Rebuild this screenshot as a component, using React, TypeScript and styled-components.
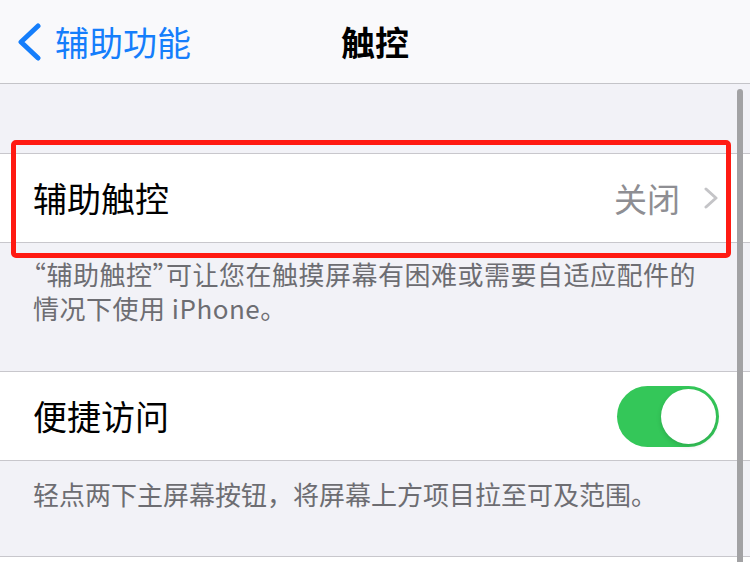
import React from "react";
import styled, { createGlobalStyle, css } from "styled-components";

const Global = createGlobalStyle`
  html, body { margin: 0; padding: 0; }
  body {
    background: #f2f2f7;
    font-family: "Noto Sans CJK SC", "Noto Sans", sans-serif;
    -webkit-font-smoothing: antialiased;
  }
`;

const Page = styled.div`
  position: relative;
  width: 750px;
  height: 562px;
  overflow: hidden;
  background: #f2f2f7;
`;

const NavBar = styled.header`
  display: grid;
  grid-template-columns: 1fr auto 1fr;
  align-items: center;
  height: 83px;
  background: #f9f9fb;
  border-bottom: 1px solid #c4c4c8;
`;

const BackButton = styled.div`
  display: flex;
  align-items: center;
  gap: 14px;
  padding-left: 17px;
  color: #157efb;
  font-size: 34px;
  line-height: 1;
`;

const Title = styled.div`
  font-size: 34px;
  font-weight: 700;
  color: #000;
  line-height: 1;
`;

const Spacer = styled.div<{ $h: number }>`
  height: ${(p) => p.$h}px;
`;

const Group = styled.div`
  position: relative;
  background: #fff;
  border-top: 1px solid #c8c7cc;
  border-bottom: 1px solid #c8c7cc;
`;

const Cell = styled.div`
  display: flex;
  align-items: center;
  justify-content: space-between;
  height: 88px;
  padding: 0 32px 0 33px;
`;

const Label = styled.span`
  font-size: 34px;
  color: #000;
  line-height: 1;
`;

const Detail = styled.div`
  display: flex;
  align-items: center;
  gap: 24px;
  color: #8e8e93;
  font-size: 33px;
  line-height: 1;
`;

const Footer = styled.div<{ $top: number; $bottom: number; $halfQuotes?: boolean }>`
  padding: ${(p) => p.$top}px 40px ${(p) => p.$bottom}px 33px;
  font-size: 26px;
  line-height: 34px;
  color: #6d6d72;
  ${(p) =>
    p.$halfQuotes &&
    css`
      font-feature-settings: "halt" 1;
      letter-spacing: 0.5px;
    `}
`;

const Highlight = styled.div`
  position: absolute;
  top: -14px;
  left: 11px;
  right: 19px;
  bottom: -16px;
  border: 5px solid #ff1a12;
  border-radius: 5px;
  pointer-events: none;
`;

const Toggle = styled.div<{ $on: boolean }>`
  position: relative;
  width: 102px;
  height: 61px;
  border-radius: 31px;
  background: ${(p) => (p.$on ? "#34c759" : "#e9e9eb")};
  margin-right: -1px;
`;

const Knob = styled.div`
  position: absolute;
  top: 3px;
  right: 3px;
  width: 55px;
  height: 55px;
  border-radius: 50%;
  background: #fff;
  box-shadow: 0 2px 5px rgba(0, 0, 0, 0.15);
`;

const ScrollBar = styled.div`
  position: absolute;
  top: 89px;
  left: 737px;
  width: 6px;
  height: 500px;
  border-radius: 3px;
  background: #a2a2a4;
`;

const Chevron = () => (
  <svg width="14" height="22" viewBox="0 0 14 22">
    <path d="M2 2 L12 11 L2 20" fill="none" stroke="#c4c4c7" strokeWidth="3" strokeLinecap="round" strokeLinejoin="round" />
  </svg>
);

const BackChevron = () => (
  <svg width="24" height="38" viewBox="0 0 24 38">
    <path d="M21 3 L4 19 L21 35" fill="none" stroke="#157efb" strokeWidth="5" strokeLinecap="round" strokeLinejoin="round" />
  </svg>
);

export default function App() {
  return (
    <Page>
      <Global />
      <NavBar>
        <BackButton>
          <BackChevron />
          <span>辅助功能</span>
        </BackButton>
        <Title>触控</Title>
        <div />
      </NavBar>
      <Spacer $h={69} />
      <Group>
        <Cell>
          <Label>辅助触控</Label>
          <Detail>
            <span>关闭</span>
            <Chevron />
          </Detail>
        </Cell>
        <Highlight />
      </Group>
      <Footer $top={14} $bottom={46} $halfQuotes>
        “辅助触控”可让您在触摸屏幕有困难或需要自适应配件的情况下使用 iPhone。
      </Footer>
      <Group>
        <Cell>
          <Label>便捷访问</Label>
          <Toggle $on>
            <Knob />
          </Toggle>
        </Cell>
      </Group>
      <Footer $top={16} $bottom={45}>
        轻点两下主屏幕按钮，将屏幕上方项目拉至可及范围。
      </Footer>
      <Group>
        <Cell />
      </Group>
      <ScrollBar />
    </Page>
  );
}
